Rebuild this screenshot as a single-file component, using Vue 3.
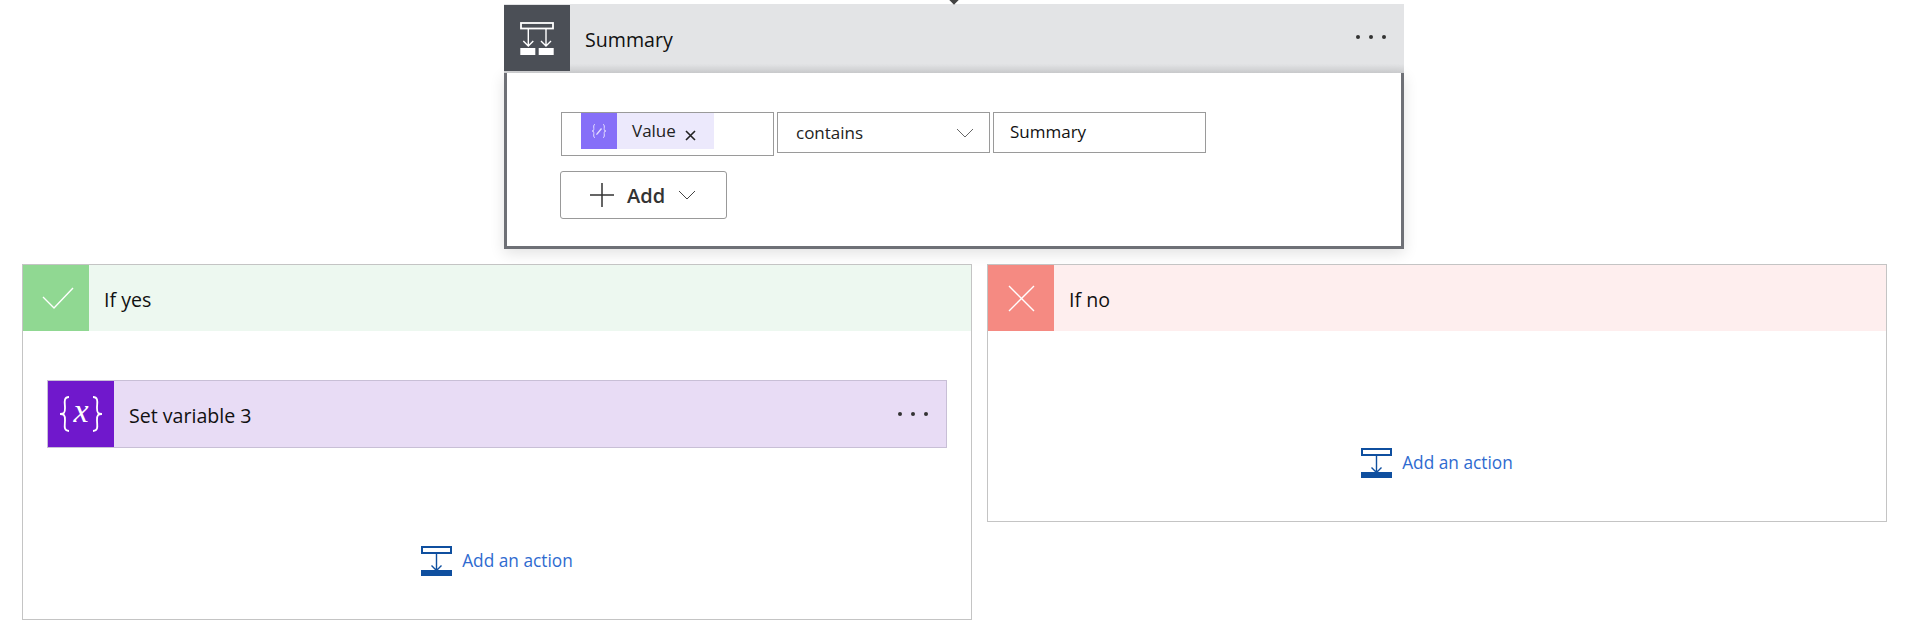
<script setup>
const branches = [
  { key: 'yes', title: 'If yes', hasAction: true },
  { key: 'no', title: 'If no', hasAction: false },
]
</script>

<template>
  <div class="page">
    <span class="tip"></span>
    <section class="scope">
      <header class="scope-head">
        <div class="tile tile-dark">
          <svg width="38" height="36" viewBox="0 0 38 36" fill="none" stroke="#fff" stroke-width="1.4">
            <rect x="3" y="3" width="32" height="5.500" stroke-width="1.800" />
            <path d="M10.300 9v17M5.300 21l5 5 5-5M28 9v17M23 21l5 5 5-5" />
            <rect x="2.300" y="28" width="15" height="7" fill="#fff" stroke="none" />
            <rect x="20.700" y="28" width="15" height="7" fill="#fff" stroke="none" />
          </svg>
        </div>
        <span class="title">Summary</span>
        <span class="dots"><i></i><i></i><i></i></span>
      </header>
      <div class="scope-body">
        <div class="fields">
          <div class="field field-token">
            <div class="token">
              <span class="token-icon">
                <svg width="18" height="18" viewBox="0 0 18 18" fill="none" stroke="#e4dcff" stroke-width="1">
                  <path d="M5 2.500C3.200 2.500 3.800 4.500 3.800 6.500S3.500 9 2 9c1.500 0 1.800.5 1.800 2.500S3.200 15.500 5 15.500" />
                  <path d="M13 2.500c1.800 0 1.200 2 1.200 4s.3 2.500 1.800 2.500c-1.500 0-1.800.5-1.800 2.500s.6 4-1.200 4" />
                  <path d="M6.500 11.500l4.500-5.500 1 1-4.500 5.500-1.500.5z" fill="#e4dcff" stroke="none" />
                </svg>
              </span>
              <span class="token-label">Value</span>
              <svg class="token-x" width="11" height="11" viewBox="0 0 11 11" fill="none" stroke="#222" stroke-width="1.600">
                <path d="M1 1l9 9M10 1l-9 9" />
              </svg>
            </div>
          </div>
          <div class="field field-select">
            <span>contains</span>
            <svg width="18" height="10" viewBox="0 0 18 10" fill="none" stroke="#666" stroke-width="1">
              <path d="M1 1l8 8 8-8" />
            </svg>
          </div>
          <div class="field field-text"><span>Summary</span></div>
        </div>
        <button class="add-btn" type="button">
          <svg width="26" height="26" viewBox="0 0 26 26" fill="none" stroke="#333" stroke-width="1.500">
            <path d="M13 1v24M1 13h24" />
          </svg>
          <span>Add</span>
          <svg class="add-chevron" width="18" height="10" viewBox="0 0 18 10" fill="none" stroke="#444" stroke-width="1">
            <path d="M1 1l8 8 8-8" />
          </svg>
        </button>
      </div>
    </section>

    <div class="branches">
      <section v-for="b in branches" :key="b.key" class="branch" :class="`branch-${b.key}`">
        <header class="branch-head">
          <div class="tile branch-tile">
            <svg v-if="b.key === 'yes'" class="check" width="32" height="24" viewBox="0 0 32 24" fill="none" stroke="#fff" stroke-width="1.400">
              <path d="M1 11l11 11L31 2" />
            </svg>
            <svg v-else width="27" height="27" viewBox="0 0 27 27" fill="none" stroke="#fff" stroke-width="1.400">
              <path d="M1 1l25 25M26 1L1 26" />
            </svg>
          </div>
          <span class="title">{{ b.title }}</span>
        </header>
        <div class="branch-body">
          <article v-if="b.hasAction" class="action">
            <div class="tile tile-purple">
              <svg width="12" height="36" viewBox="0 0 12 36" fill="none" stroke="#fff" stroke-width="1.800">
                <path d="M11 1C5 1 7 7 7 12s-1 6-5 6c4 0 5 1 5 6s-2 11 4 11" />
              </svg>
              <span class="x-glyph">x</span>
              <svg width="12" height="36" viewBox="0 0 12 36" fill="none" stroke="#fff" stroke-width="1.800">
                <path d="M1 1c6 0 4 6 4 11s1 6 5 6c-4 0-5 1-5 6s2 11-4 11" />
              </svg>
            </div>
            <span class="title">Set variable 3</span>
            <span class="dots"><i></i><i></i><i></i></span>
          </article>
          <a class="add-action">
            <svg width="31" height="30" viewBox="0 0 31 30" fill="none" stroke="#0f4f9f" stroke-width="1.400">
              <rect x="1" y="1" width="29" height="6" stroke-width="2" />
              <path d="M15.500 7v17M10.500 19.500l5 5 5-5" />
              <rect x="0" y="24" width="31" height="6" fill="#0f4f9f" stroke="none" />
            </svg>
            <span>Add an action</span>
          </a>
        </div>
      </section>
    </div>
  </div>
</template>

<style scoped>
.page {
  position: relative;
  width: 1905px;
  height: 633px;
  padding-top: 4px;
  box-sizing: border-box;
  background: #fff;
  font-family: "Open Sans", "Noto Sans", sans-serif;
  color: #111;
  overflow: hidden;
}
.tip {
  position: absolute;
  left: 950px;
  top: -5px;
  width: 8px;
  height: 8px;
  background: #444;
  transform: rotate(45deg);
}
.scope {
  margin-left: 504px;
  width: 900px;
}
.scope-head {
  height: 69px;
  display: flex;
  align-items: center;
  background: linear-gradient(#e3e4e6 0, #e3e4e6 60px, #cfd0d2 69px);
}
.tile {
  flex: none;
  width: 66px;
  height: 66px;
  display: flex;
  align-items: center;
  justify-content: center;
}
.tile-dark {
  background: #4b4f56;
  align-self: flex-start;
  margin-top: 1px;
}
.title {
  margin-left: 15px;
  margin-top: 2px;
  font-size: 19.6px;
}
.check {
  margin-left: 4px;
}
.dots {
  margin-left: auto;
  margin-right: 18px;
  display: flex;
  gap: 9px;
}
.dots i {
  width: 4px;
  height: 4px;
  border-radius: 50%;
  background: #333;
}
.scope-head .dots {
  margin-top: -3px;
}
.scope-body {
  height: 176px;
  box-sizing: border-box;
  border: 3px solid #6e7076;
  border-top: 0;
  background: #fff;
  padding: 39px 0 0 53px;
  box-shadow: 0 4px 14px rgba(0, 0, 0, 0.12);
}
.fields {
  display: flex;
  align-items: flex-start;
  gap: 3px;
  margin-left: 1px;
}
.field {
  box-sizing: border-box;
  width: 213px;
  height: 41px;
  border: 1px solid #9a9a9a;
  display: flex;
  align-items: center;
  font-size: 17px;
  color: #222;
}
.field-token {
  height: 44px;
  padding-left: 19px;
  align-items: flex-start;
}
.token {
  display: flex;
  align-items: center;
  width: 133px;
  height: 36px;
  background: #ece9fc;
}
.token-icon {
  width: 36px;
  height: 36px;
  background: #866ff8;
  display: flex;
  align-items: center;
  justify-content: center;
}
.token-label {
  margin-left: 15px;
  font-size: 17px;
  margin-top: -2px;
}
.token-x {
  margin-left: 9px;
  margin-top: 8px;
}
.field-select {
  justify-content: space-between;
  padding: 0 15px 0 18px;
}
.field-text {
  padding-left: 16px;
  color: #111;
}
.field-text span {
  margin-top: -2px;
}
.add-btn {
  margin-top: 15px;
  width: 167px;
  height: 48px;
  box-sizing: border-box;
  border: 1px solid #999;
  border-radius: 3px;
  background: #fff;
  display: flex;
  align-items: center;
  padding: 0 0 0 28px;
  gap: 12px;
  font-family: inherit;
  font-size: 20px;
  font-weight: 600;
  color: #333;
}
.add-chevron {
  margin-left: 1px;
}
.branches {
  display: flex;
  align-items: flex-start;
  gap: 15px;
  margin: 15px 0 0 22px;
}
.branch {
  box-sizing: border-box;
  width: 950px;
  border: 1px solid #c4c4c4;
  background: #fff;
}
.branch-no {
  width: 900px;
}
.branch-head {
  display: flex;
  align-items: center;
  height: 66px;
}
.branch-yes .branch-head { background: #edf8f0; }
.branch-no .branch-head { background: #feeeee; }
.branch-yes .branch-tile { background: #90d892; }
.branch-no .branch-tile { background: #f58a82; }
.branch-body {
  display: flex;
  flex-direction: column;
  align-items: stretch;
  padding: 49px 24px 43px;
}
.branch-no .branch-body {
  padding: 117px 24px 43px;
}
.action {
  height: 68px;
  box-sizing: border-box;
  border: 1px solid #c8bfd6;
  background: #e8dcf5;
  display: flex;
  align-items: center;
  margin-bottom: 98px;
}
.tile-purple {
  background: #7018cc;
}
.x-glyph {
  width: 22px;
  text-align: center;
  font-family: "Liberation Serif", serif;
  font-style: italic;
  font-size: 34px;
  line-height: 40px;
  margin-top: -6px;
  color: #fff;
}
.add-action {
  align-self: center;
  display: flex;
  align-items: center;
  gap: 10px;
  color: #2f6bd0;
  font-size: 17.3px;
}
.add-action span {
  margin-top: -2px;
}
</style>
